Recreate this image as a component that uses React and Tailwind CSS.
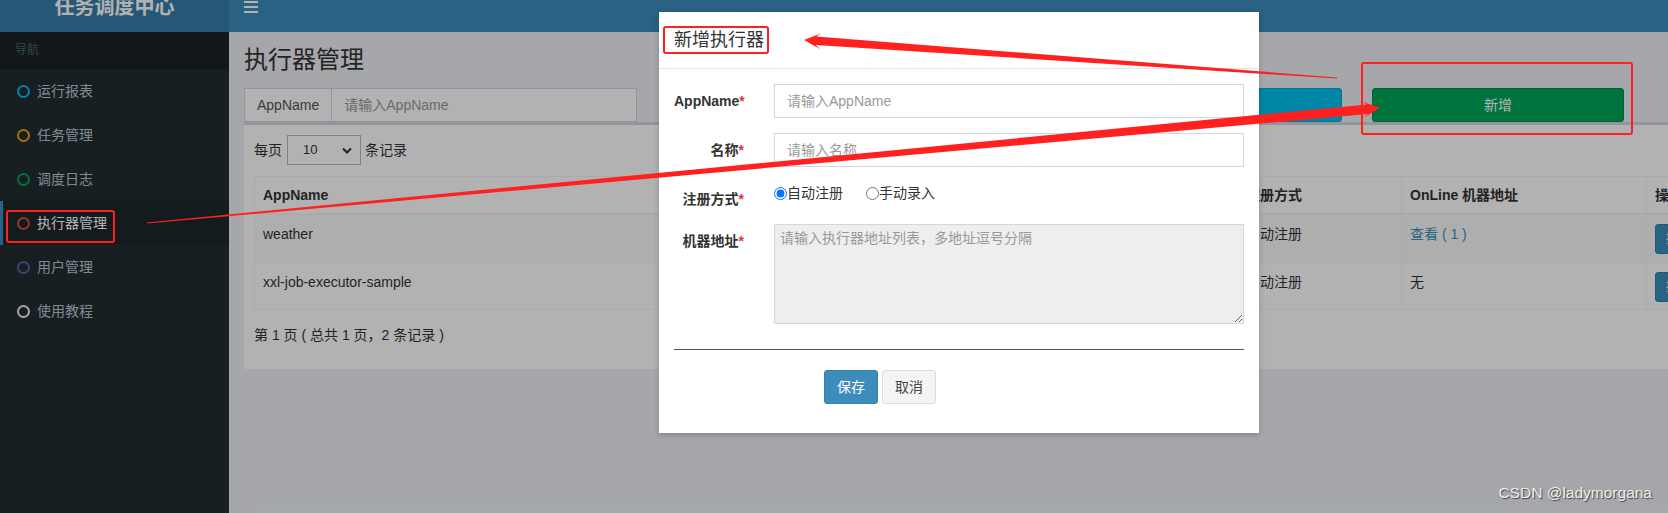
import React from "react";

const menus = [
  { name: "运行报表", ring: "border-[#00c0ef]" },
  { name: "任务管理", ring: "border-[#f39c12]" },
  { name: "调度日志", ring: "border-[#00a65a]" },
  { name: "执行器管理", ring: "border-[#dd4b39]", active: true },
  { name: "用户管理", ring: "border-[#605ca8]" },
  { name: "使用教程", ring: "border-[#eeeeee]" },
];

const rows = [
  { app: "weather", title: "天气", type: "自动注册", online: "查看 ( 1 )", link: true, h: "h-[49px]", bg: "bg-[#f9f9f9]" },
  { app: "xxl-job-executor-sample", title: "示例执行器", type: "自动注册", online: "无", h: "h-[47px]", bg: "bg-white" },
];

// tapered screenshot-style arrow, tail -> tip
function arrow([tx, ty], [px, py], tw, sw, hw, hl) {
  const dx = px - tx;
  const dy = py - ty;
  const len = Math.hypot(dx, dy);
  const ux = dx / len;
  const uy = dy / len;
  const nx = -uy;
  const ny = ux;
  const j = [px - ux * hl * 0.7, py - uy * hl * 0.7];
  const b = [px - ux * hl, py - uy * hl];
  const pts = [
    [tx + nx * tw, ty + ny * tw],
    [j[0] + nx * sw, j[1] + ny * sw],
    [b[0] + nx * hw, b[1] + ny * hw],
    [px, py],
    [b[0] - nx * hw, b[1] - ny * hw],
    [j[0] - nx * sw, j[1] - ny * sw],
    [tx - nx * tw, ty - ny * tw],
  ];
  return pts.map((p) => p.map((v) => v.toFixed(1)).join(",")).join(" ");
}

function Header() {
  return (
    <header className="flex h-[50px]">
      <div className="w-[229px] shrink-0 bg-[#367fa9] text-center text-[20px] font-bold leading-[50px] text-white">
        任务调度中心
      </div>
      <div className="flex flex-1 items-center bg-[#3c8dbc] px-[15px]">
        <svg width="14" height="12" viewBox="0 0 14 12">
          <rect x="0" y="0" width="14" height="2" fill="#fff" />
          <rect x="0" y="5" width="14" height="2" fill="#fff" />
          <rect x="0" y="10" width="14" height="2" fill="#fff" />
        </svg>
      </div>
    </header>
  );
}

function Sidebar() {
  return (
    <aside className="h-[481px] w-[229px] shrink-0 bg-[#222d32]">
      <div className="bg-[#1a2226] py-[10px] pl-[15px] text-[12px] leading-[17px] text-[#4b646f]">导航</div>
      {menus.map((m) => (
        <div
          key={m.name}
          className={`flex h-[44px] items-center border-l-[3px] pl-[14px] ${
            m.active ? "border-[#3c8dbc] bg-[#1e282c] text-white" : "border-transparent text-[#b8c7ce]"
          }`}
        >
          <span className={`h-[13px] w-[13px] rounded-full border-[2.5px] ${m.ring}`} />
          <span className="ml-[7px] leading-[20px]">{m.name}</span>
        </div>
      ))}
    </aside>
  );
}

function InputGroup({ label, placeholder }) {
  return (
    <div className="flex h-[34px] w-[393px] shrink-0">
      <span className="flex items-center border border-[#d2d6de] bg-white px-[12px] text-[#555]">{label}</span>
      <input
        className="h-full min-w-0 flex-1 border border-l-0 border-[#d2d6de] bg-white px-[12px] text-[14px] text-[#555] outline-none placeholder:text-[#999]"
        placeholder={placeholder}
      />
    </div>
  );
}

function Content() {
  return (
    <main className="h-[481px] flex-1 overflow-hidden">
      <div className="w-[1600px] px-[15px] pt-[15px]">
        <h1 className="text-[24px] leading-[26px] text-[#333]">执行器管理</h1>
        <div className="pt-[15px]">
          <div className="flex gap-[30px]">
            <InputGroup label="AppName" placeholder="请输入AppName" />
            <InputGroup label="名称" placeholder="请输入名称" />
            <button className="h-[34px] w-[252px] shrink-0 rounded-[3px] border border-[#00acd6] bg-[#00c0ef] text-white">
              搜索
            </button>
            <button className="h-[34px] w-[252px] shrink-0 rounded-[3px] border border-[#008d4c] bg-[#00a65a] text-white">
              新增
            </button>
          </div>

          <div className="border-t-[3px] border-[#d2d6de] bg-white p-[10px]">
            <div className="flex items-center leading-[20px]">
              <span>每页</span>
              <div className="ml-[5px] mr-[4px] flex h-[30px] w-[74px] items-center justify-between border border-[#bbb] bg-white pl-[15px] pr-[8px] text-[13px]">
                <span>10</span>
                <svg width="10" height="7" viewBox="0 0 10 7">
                  <path d="M1 1.5l4 4 4-4" fill="none" stroke="#333" strokeWidth="2" />
                </svg>
              </div>
              <span>条记录</span>
            </div>

            <table className="mt-[11px] w-[1546px] table-fixed border-collapse border border-[#f4f4f4] leading-[20px]">
              <colgroup>
                <col className="w-[506px]" />
                <col className="w-[477px]" />
                <col className="w-[164px]" />
                <col className="w-[245px]" />
                <col className="w-[154px]" />
              </colgroup>
              <thead>
                <tr className="h-[37px]">
                  {["AppName", "名称", "注册方式", "OnLine 机器地址", "操作"].map((h) => (
                    <th key={h} className="border border-b-2 border-[#f4f4f4] px-[8px] py-[7px] text-left font-bold">
                      {h}
                    </th>
                  ))}
                </tr>
              </thead>
              <tbody>
                {rows.map((r) => (
                  <tr key={r.app} className={`${r.h} ${r.bg}`}>
                    <td className="border border-[#f4f4f4] px-[8px] pt-[9px] align-top">{r.app}</td>
                    <td className="border border-[#f4f4f4] px-[8px] pt-[9px] align-top">{r.title}</td>
                    <td className="border border-[#f4f4f4] px-[8px] pt-[9px] align-top">{r.type}</td>
                    <td className="border border-[#f4f4f4] px-[8px] pt-[9px] align-top">
                      {r.link ? <span className="text-[#3c8dbc]">{r.online}</span> : r.online}
                    </td>
                    <td className="border border-[#f4f4f4] px-[8px] pt-[9px] align-top">
                      <span className="inline-flex h-[30px] items-center rounded-[3px] border border-[#367fa9] bg-[#3c8dbc] px-[10px] text-[12px] text-white">
                        操作 ▾
                      </span>
                    </td>
                  </tr>
                ))}
              </tbody>
            </table>

            <div className="mb-[14px] mt-[15px] leading-[20px]">第 1 页 ( 总共 1 页，2 条记录 )</div>
          </div>
        </div>
      </div>
    </main>
  );
}

function FormRow({ label, children, labelPad = "pt-[7px]" }) {
  return (
    <div className="-mx-[15px] mb-[15px] flex">
      <label className={`w-[100px] shrink-0 px-[15px] text-right font-bold leading-[20px] ${labelPad}`}>
        {label}
        <span className="text-[#e3342f]">*</span>
      </label>
      <div className="w-[500px] px-[15px]">{children}</div>
    </div>
  );
}

function Modal() {
  return (
    <div className="absolute left-[659px] top-[12px] w-[600px] bg-white text-[#333] shadow-[0_2px_6px_rgba(0,0,0,0.2)]">
      <div className="border-b border-[#e5e5e5] p-[15px]">
        <h4 className="text-[18px] leading-[26px]">新增执行器</h4>
      </div>
      <div className="px-[15px] pt-[15px]">
        <FormRow label="AppName">
          <input
            className="h-[34px] w-full border border-[#d2d6de] px-[12px] text-[14px] outline-none placeholder:text-[#999]"
            placeholder="请输入AppName"
          />
        </FormRow>
        <FormRow label="名称">
          <input
            className="h-[34px] w-full border border-[#d2d6de] px-[12px] text-[14px] outline-none placeholder:text-[#999]"
            placeholder="请输入名称"
          />
        </FormRow>
        <FormRow label="注册方式">
          <div className="flex pt-px leading-[20px]">
            <label className="mr-[23px] flex items-center">
              <input type="radio" name="addressType" defaultChecked className="m-0 h-[13px] w-[13px]" />
              <span>自动注册</span>
            </label>
            <label className="flex items-center">
              <input type="radio" name="addressType" className="m-0 h-[13px] w-[13px]" />
              <span>手动录入</span>
            </label>
          </div>
        </FormRow>
        <FormRow label="机器地址">
          <textarea
            readOnly
            className="block h-[100px] w-full border border-[#d2d6de] bg-[#eee] px-[5px] py-[3px] text-[14px] leading-[20px] outline-none placeholder:text-[#999]"
            placeholder="请输入执行器地址列表，多地址逗号分隔"
          />
        </FormRow>
        <div className="mt-[25px] h-px bg-[#555]" />
        <div className="flex gap-[4px] pb-[29px] pl-[150px] pt-[20px]">
          <button className="h-[34px] rounded-[3px] border border-[#367fa9] bg-[#3c8dbc] px-[12px] text-white">保存</button>
          <button className="h-[34px] rounded-[3px] border border-[#ddd] bg-[#f4f4f4] px-[12px] text-[#444]">取消</button>
        </div>
      </div>
    </div>
  );
}

function Annotations() {
  const red = "#ff2020";
  return (
    <svg className="pointer-events-none absolute inset-0" width="1668" height="513" viewBox="0 0 1668 513">
      <rect x="7" y="211" width="107" height="31" rx="2" fill="none" stroke={red} strokeWidth="2" />
      <rect x="664" y="27" width="104" height="26" rx="2" fill="none" stroke={red} strokeWidth="2" />
      <rect x="1362" y="63" width="270" height="71" rx="2" fill="none" stroke={red} strokeWidth="2" />
      <polygon points={arrow([147, 223], [1380, 108], 0.6, 4.8, 8.5, 18)} fill={red} />
      <polygon points={arrow([1337, 78], [804, 40], 0.6, 4.3, 8, 17)} fill={red} />
    </svg>
  );
}

export default function App() {
  return (
    <div className="relative h-[513px] w-[1668px] overflow-hidden bg-[#ecf0f5] font-['Liberation_Sans','Noto_Sans_CJK_SC',sans-serif] text-[14px] text-[#333]">
      <div className="-mt-[18px]">
        <Header />
        <div className="flex">
          <Sidebar />
          <Content />
        </div>
      </div>
      <div className="absolute inset-0 bg-black/30" />
      <Modal />
      <Annotations />
      <div className="absolute bottom-[10px] right-[16px] text-[15.5px] leading-[20px] text-[#eeeeee] [text-shadow:1px_1px_1px_rgba(0,0,0,0.6)]">
        CSDN @ladymorgana
      </div>
    </div>
  );
}
